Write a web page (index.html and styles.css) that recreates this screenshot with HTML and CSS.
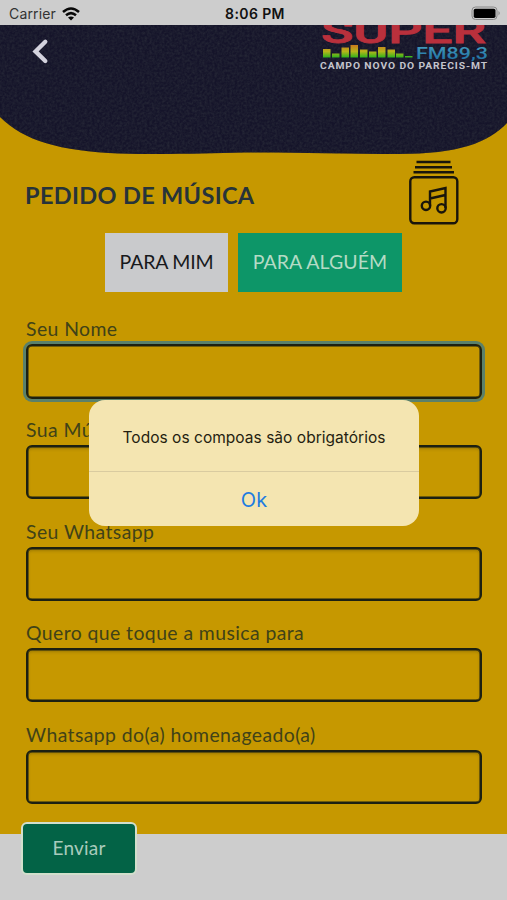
FILE: index.html
```html
<!DOCTYPE html>
<html lang="pt-BR">
<head>
<meta charset="utf-8">
<title>Pedido de Música</title>
<link rel="stylesheet" href="styles.css">
</head>
<body>
<div class="screen">
  <header class="status">
    <span class="carrier"><span class="carrier-name">Carrier</span>
      <svg width="18" height="14" viewBox="0 0 18 14" fill="none" stroke="#080808" stroke-width="2.500"><path d="M1 5Q9-2 17 5M4 8.300Q9 4 14 8.300"/><path d="M9 13.500L6 10.600Q9 8.400 12 10.600Z" fill="#080808" stroke="none"/></svg>
    </span>
    <span class="clock">8:06 PM</span>
    <svg class="battery" width="30" height="15" viewBox="0 0 30 15"><rect x="1" y="1" width="25" height="12.500" rx="3.500" fill="none" stroke="#888" stroke-width="1"/><rect x="2.700" y="2.700" width="21.800" height="9.300" rx="1.800" fill="#000"/><path d="M27.500 5Q30 7.200 27.500 9.500Z" fill="#888"/></svg>
  </header>
  <main class="page">
    <svg class="hero" width="507" height="130" viewBox="0 25 507 130">
      <defs>
        <filter id="grain" x="0" y="0" width="100%" height="100%" color-interpolation-filters="sRGB"><feTurbulence type="fractalNoise" baseFrequency=".4" numOctaves="2" seed="4" result="n"/><feColorMatrix in="n" values="0 0 0 0 .17  0 0 0 0 .18  0 0 0 0 .23  1.2 0 0 0 -.35"/><feComposite in2="SourceGraphic" operator="in" result="g"/><feMerge><feMergeNode in="SourceGraphic"/><feMergeNode in="g"/></feMerge></filter>
        <linearGradient id="eq" gradientUnits="userSpaceOnUse" x1="0" y1="45" x2="0" y2="58"><stop offset="0" stop-color="#cc7a1c"/><stop offset=".5" stop-color="#b5b51b"/><stop offset="1" stop-color="#22b41c"/></linearGradient>
        <linearGradient id="fm" x1="0" y1="0" x2="0" y2="1"><stop offset="0" stop-color="#4aa3c0"/><stop offset="1" stop-color="#1a6ba0"/></linearGradient>
      </defs>
      <path d="M0 25H507V123C488 143 458 154 399 154C340 154 290 152 245 152.500C205 153 170 155 119 153.500C60 151 24 141 0 117Z" fill="#15142a" filter="url(#grain)"/>
      <path d="M45.300 41.700L35.500 51.400L45.300 61" fill="none" stroke="#d3d2dd" stroke-width="4.300" stroke-linecap="round"/>
      <text class="logo-name" x="321" y="42.500" textLength="165" lengthAdjust="spacingAndGlyphs">SUPER</text>
      <path d="M323 49h7.500v8.500h-7.500zM332 53.500h7.500v4h-7.500zM341.500 47.500h7.500v10h-7.500zM350.500 45h7.500v12.500h-7.500zM360 49.500h7.500v8h-7.500zM369 51.500h7.500v6h-7.500zM378 47h7.500v10.500h-7.500zM387.500 49.500h7.500v8h-7.500zM396 53.500h7.500v4h-7.500zM405 56h7.500v1.500h-7.500z" fill="url(#eq)"/>
      <text class="logo-fm" x="416" y="58.500" textLength="72" lengthAdjust="spacingAndGlyphs" fill="url(#fm)">FM89,3</text>
      <text class="logo-city" x="320" y="69" textLength="168" lengthAdjust="spacingAndGlyphs">CAMPO NOVO DO PARECIS-MT</text>
    </svg>
    <div class="heading">
      <h1>PEDIDO DE MÚSICA</h1>
      <svg width="50" height="66" viewBox="0 0 50 66" fill="none" stroke="#19150b" stroke-width="2.400"><path d="M7.500 3H41.500M6 8.300H43M4.500 13.200H45"/><rect x="1.300" y="18.200" width="47" height="46" rx="4"/><circle cx="17" cy="46.800" r="4.200"/><circle cx="32.500" cy="49.300" r="4.200"/><path d="M21 46.500V32.500L36.500 29V49M21 39.500L36.500 36"/></svg>
    </div>
    <div class="tabs"><button class="tab tab-self">PARA MIM</button><button class="tab tab-other">PARA ALGUÉM</button></div>
    <form>
      <label class="field">Seu Nome<input class="focused"></label>
      <label class="field">Sua Música<input></label>
      <label class="field">Seu Whatsapp<input></label>
      <label class="field">Quero que toque a musica para<input></label>
      <label class="field">Whatsapp do(a) homenageado(a)<input></label>
      <button class="send" type="button">Enviar</button>
    </form>
  </main>
  <div class="alert" role="alertdialog">
    <p>Todos os compoas são obrigatórios</p>
    <button>Ok</button>
  </div>
</div>
</body>
</html>
```
FILE: styles.css
```css
* { box-sizing: border-box; }
body { margin: 0; font-family: Lato, sans-serif; }
button, input { font: inherit; margin: 0; }
.screen { position: relative; width: 507px; height: 900px; overflow: hidden; background: #cdcdcd; }
.status { height: 25px; display: grid; grid-template-columns: 1fr auto 1fr; align-items: center; padding: 2px 6px 0 9px; background: #cdcdcd; font-family: Inter, sans-serif; font-size: 14px; color: #111; }
.carrier { display: flex; align-items: center; gap: 6px; color: #333; }
.carrier-name { letter-spacing: .15px; }
.clock { font-weight: 600; letter-spacing: .4px; }
.battery { justify-self: end; }
.page { height: 809px; background: #c69800; }
.hero { display: block; }
.logo-name { font: 500 33px Roboto, sans-serif; fill: #b9303c; stroke: #b9303c; stroke-width: .8px; }
.logo-fm { font: 500 17px Roboto, sans-serif; }
.logo-city { font: 700 9px Roboto, sans-serif; letter-spacing: .8px; fill: #c4c4cc; }
.heading { height: 78px; display: flex; justify-content: space-between; align-items: flex-start; padding: 4px 48px 0 25px; }
h1 { margin: 21px 0 0; font-size: 23.500px; line-height: 30px; letter-spacing: .35px; color: #26333a; }
.tabs { display: flex; justify-content: center; gap: 10px; height: 59px; }
.tab { border: 0; padding: 0 0 3px; font-size: 19.500px; }
.tab-self { width: 123px; background: #c9cacc; color: #17191c; letter-spacing: -.2px; }
.tab-other { width: 164px; background: #0d9668; color: #b4dbc5; letter-spacing: .1px; }
form { padding: 23px 25px 0 26px; }
.field { display: block; height: 101.400px; font-size: 19.400px; line-height: 28px; letter-spacing: .42px; color: #404218; }
.field input { display: block; width: 456px; height: 54px; margin-top: 1px; border: 2px solid #1c2012; border-radius: 6px; background: transparent; box-shadow: inset 0 0 0 .5px #1c2012, inset 0 2px 3px #4c400850; outline: 0; }
.field .focused { height: 55px; box-shadow: inset 0 0 0 .5px #1c2012, 0 0 0 3px #5a806a; }
.send { display: block; width: 116px; height: 53px; margin: 0 0 0 -5px; padding: 0 0 1px; border: 2px solid #d2dfcc; border-radius: 6px; background: #036346; color: #a9cbbc; font-size: 19px; letter-spacing: .2px; }
.alert { position: absolute; left: 89px; top: 400px; width: 330px; height: 126px; border-radius: 16px; background: #f4e5b1; overflow: hidden; display: flex; flex-direction: column; font-family: Inter, sans-serif; text-align: center; }
.alert p { margin: 0; height: 72px; line-height: 75px; font-size: 15.500px; letter-spacing: .03px; color: #241e10; border-bottom: 1px solid #d9cba0; }
.alert button { flex: 1; border: 0; background: none; color: #1e7ce0; font-size: 20px; padding: 1px 0 0; }
```
